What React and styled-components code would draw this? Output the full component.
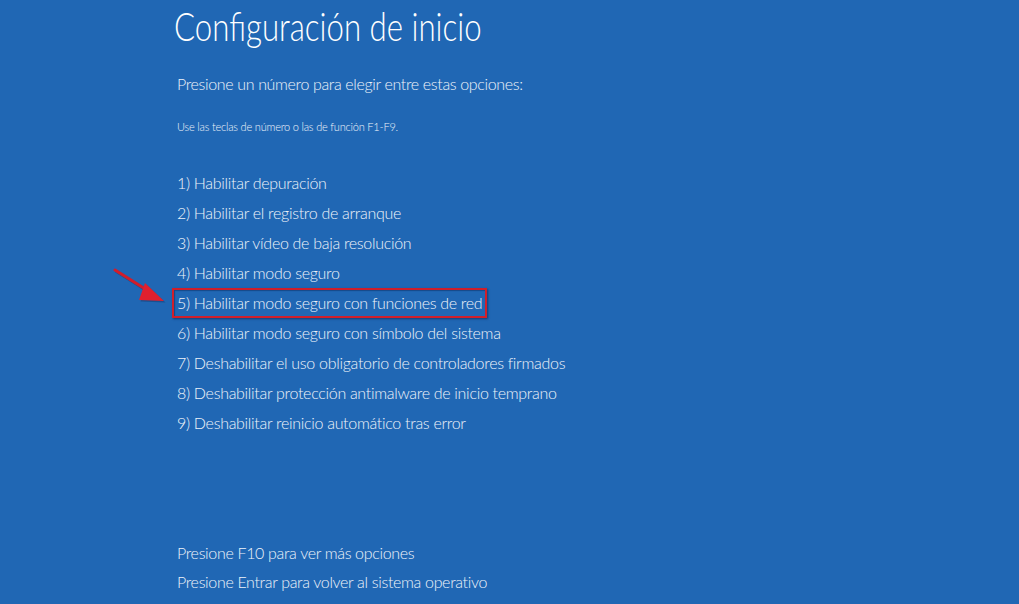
import styled, { createGlobalStyle } from 'styled-components';

const GlobalStyle = createGlobalStyle`
  html, body {
    margin: 0;
    padding: 0;
    background: #2067b4;
  }
  body {
    font-family: Lato, "Open Sans", sans-serif;
    color: #eef3fa;
  }
`;

const options = [
  'Habilitar depuración',
  'Habilitar el registro de arranque',
  'Habilitar vídeo de baja resolución',
  'Habilitar modo seguro',
  'Habilitar modo seguro con funciones de red',
  'Habilitar modo seguro con símbolo del sistema',
  'Deshabilitar el uso obligatorio de controladores firmados',
  'Deshabilitar protección antimalware de inicio temprano',
  'Deshabilitar reinicio automático tras error',
];

export default function App() {
  return (
    <>
      <GlobalStyle />
      <Screen>
        <Title>Configuración de inicio</Title>
        <Prompt>Presione un número para elegir entre estas opciones:</Prompt>
        <Hint>Use las teclas de número o las de función F1-F9.</Hint>
        <OptionList>
          {options.map((text, i) => (
            <Option key={text} $selected={i === 4}>
              {i === 4 && <Arrow />}
              {i + 1}) {text}
            </Option>
          ))}
        </OptionList>
        <Footer>
          <FooterLine>Presione F10 para ver más opciones</FooterLine>
          <FooterLine>Presione Entrar para volver al sistema operativo</FooterLine>
        </Footer>
      </Screen>
    </>
  );
}

const Arrow = () => (
  <ArrowSvg width="58" height="42" viewBox="0 0 58 42">
    <g transform="translate(1.5,1.5)" opacity="0.35">
      <line x1="3" y1="3" x2="38" y2="25" stroke="#0a2a55" strokeWidth="3" strokeLinecap="round" />
      <polygon points="33,16 52,34 27,33" fill="#0a2a55" />
    </g>
    <line x1="3" y1="3" x2="38" y2="25" stroke="#d21d2b" strokeWidth="3" strokeLinecap="round" />
    <polygon points="33,16 52,34 27,33" fill="#e0202e" />
  </ArrowSvg>
);

const Screen = styled.div`
  width: 1019px;
  height: 604px;
  box-sizing: border-box;
  padding: 0 0 0 175px;
  display: flex;
  flex-direction: column;
  overflow: hidden;
`;

const Title = styled.h1`
  margin: 3px 0 0 -1px;
  align-self: flex-start;
  font-size: 40px;
  font-weight: 300;
  line-height: 46px;
  color: #ffffff;
  white-space: nowrap;
  transform: scaleX(0.78);
  transform-origin: left center;
`;

const Prompt = styled.p`
  margin: 24px 0 0 2px;
  font-size: 16px;
  font-weight: 300;
  line-height: 22px;
  letter-spacing: -0.35px;
`;

const Hint = styled.p`
  margin: 25px 0 0 2px;
  font-size: 11px;
  font-weight: 300;
  line-height: 14px;
  letter-spacing: -0.2px;
`;

const OptionList = styled.ul`
  list-style: none;
  margin: 34px 0 0 0;
  padding: 0;
  display: flex;
  flex-direction: column;
`;

const Option = styled.li`
  position: relative;
  box-sizing: border-box;
  height: 30px;
  line-height: 30px;
  font-size: 16px;
  font-weight: 300;
  letter-spacing: -0.3px;
  padding-left: 2px;
  align-self: flex-start;
  white-space: nowrap;
  ${({ $selected }) =>
    $selected &&
    `
    margin-left: -3px;
    padding: 0 3px 0 3px;
    line-height: 26px;
    border: 2px solid #cf1f2b;
    box-shadow: 1px 1px 2px rgba(10, 30, 70, 0.6), inset 1px 1px 1px rgba(10, 30, 70, 0.4);
  `}
`;

const ArrowSvg = styled.svg`
  position: absolute;
  left: -62px;
  top: -23px;
`;

const Footer = styled.div`
  margin-top: auto;
  margin-bottom: 8px;
  display: flex;
  flex-direction: column;
`;

const FooterLine = styled.p`
  margin: 0 0 0 2px;
  height: 29px;
  line-height: 29px;
  font-size: 16px;
  font-weight: 300;
  letter-spacing: -0.33px;
`;
